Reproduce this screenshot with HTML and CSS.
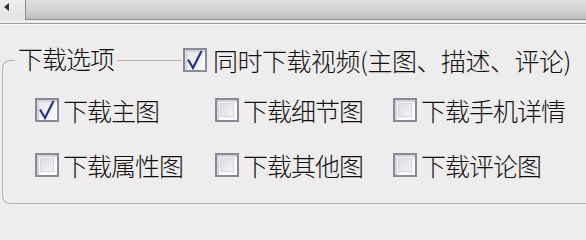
FILE: index.html
```html
<!DOCTYPE html>
<html lang="zh-CN">
<head>
<meta charset="utf-8">
<title>下载选项</title>
<link rel="stylesheet" href="styles.css">
</head>
<body>
<div class="scrollbar">
  <div class="arrow-zone"><span class="arrow"></span></div>
  <div class="thumb"></div>
</div>
<div class="sep"></div>
<div class="group">
  <div class="head">
    <span class="legend">下载选项</span>
    <label class="opt top"><span class="box checked"><svg viewBox="0 0 24 24" class="tick"><path d="M5 11.5 L10 20 L18.5 3" /></svg></span><span class="txt wide">同时下载视频(主图、描述、评论)</span></label>
  </div>
  <div class="grid">
    <label class="opt"><span class="box checked"><svg viewBox="0 0 24 24" class="tick"><path d="M5 11.5 L10 20 L18.5 3" /></svg></span><span class="txt">下载主图</span></label>
    <label class="opt"><span class="box"></span><span class="txt">下载细节图</span></label>
    <label class="opt"><span class="box"></span><span class="txt">下载手机详情</span></label>
    <label class="opt"><span class="box"></span><span class="txt">下载属性图</span></label>
    <label class="opt"><span class="box"></span><span class="txt">下载其他图</span></label>
    <label class="opt"><span class="box"></span><span class="txt">下载评论图</span></label>
  </div>
</div>
</body>
</html>
```

FILE: styles.css
```css
html, body {
  margin: 0;
  padding: 0;
  background: #eeecec;
  overflow: hidden;
}
body {
  width: 586px;
  height: 208px;
  font-family: "Noto Sans CJK SC", "Noto Sans", sans-serif;
  font-weight: 300;
  color: #111;
}
.scrollbar {
  display: flex;
  height: 20px;
}
.arrow-zone {
  width: 25px;
  background: linear-gradient(#eeeeee, #e2e2e2);
  display: flex;
  align-items: flex-start;
  padding: 3px 0 0 4px;
  box-sizing: border-box;
}
.arrow {
  width: 0;
  height: 0;
  border-top: 4px solid transparent;
  border-bottom: 4px solid transparent;
  border-right: 5px solid #333;
}
.thumb {
  flex: 1;
  border-left: 1px solid #8a8a8a;
  border-bottom: 1px solid #8a8a8a;
  background: linear-gradient(#e0e0e0, #d2d2d2 55%, #bcbcbc);
}
.sep {
  margin-top: 3px;
  height: 1px;
  background: #9a9a9a;
  border-bottom: 1px solid #fbfbfb;
}
.group {
  margin: 35px -12px 0 2px;
  border: 1px solid #b3b3b3;
  border-right: none;
  border-radius: 8px 0 0 8px;
  height: 144px;
  box-sizing: border-box;
}
.head {
  display: flex;
  align-items: center;
  margin-top: -13px;
  padding-left: 12px;
  gap: 64px;
  height: 24px;
}
.legend {
  background: #eeecec;
  padding: 0 3px;
  font-size: 25px;
  letter-spacing: -1px;
  line-height: 24px;
  margin-bottom: 5px;
}
.opt {
  display: flex;
  align-items: center;
  gap: 4px;
  font-size: 25px;
  letter-spacing: -1px;
  line-height: 24px;
  white-space: nowrap;
}
.opt.top {
  flex: 1;
  background: #eeecec;
  padding: 0 2px;
  gap: 6px;
}
.wide {
  letter-spacing: -0.5px;
}
.grid {
  display: grid;
  grid-template-columns: 180px 178px auto;
  row-gap: 31px;
  margin-top: 26px;
  padding-left: 32px;
}
.box {
  width: 24px;
  height: 24px;
  flex: none;
  box-sizing: border-box;
  border: 2px solid #878b95;
  background: #f6f6f8;
  box-shadow: inset 2px 2px 0 #d4d5dc, inset -2px -2px 0 #fbfbfc;
  position: relative;
}
.box::after {
  content: "";
  position: absolute;
  inset: 3px;
  border: 1px solid #d6d7dd;
  background: linear-gradient(135deg, #dcdde3, #f4f4f6);
}
.box.checked::after {
  display: none;
}
.box.checked {
  background: linear-gradient(135deg, #e4e5eb, #fafafb);
}
.tick {
  position: absolute;
  left: -2px;
  top: -2px;
  width: 24px;
  height: 24px;
}
.tick path {
  fill: none;
  stroke: #2a3290;
  stroke-width: 2.2;
  stroke-linejoin: miter;
  stroke-linecap: butt;
}
```
